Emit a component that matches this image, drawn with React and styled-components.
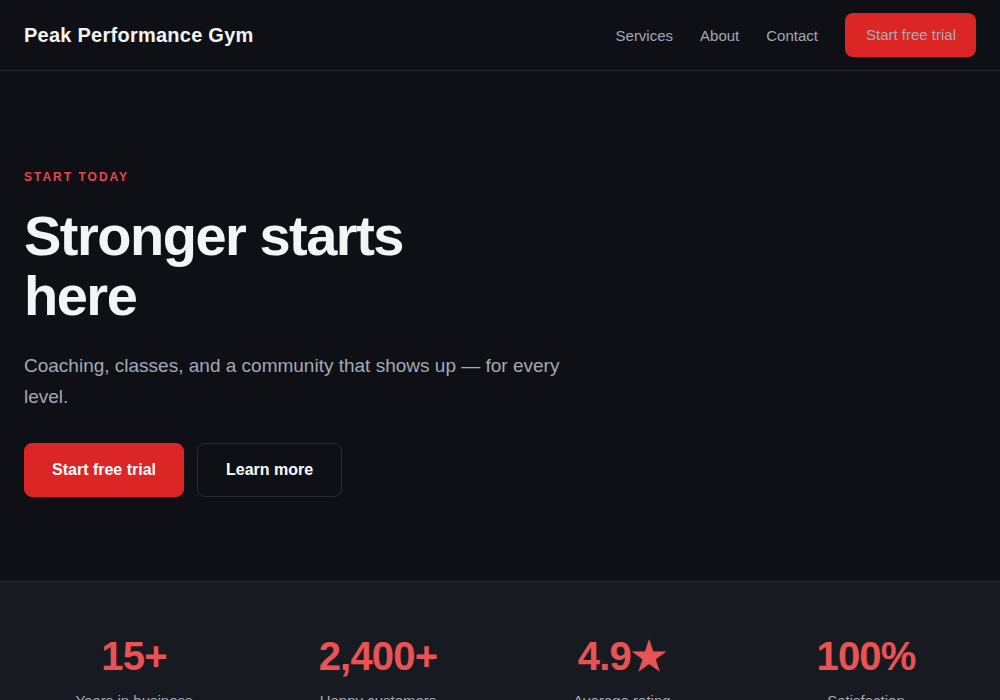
import React from 'react';
import styled, { createGlobalStyle } from 'styled-components';

const GlobalStyle = createGlobalStyle`
  * { box-sizing: border-box; }
  body {
    margin: 0;
    background: #0f1015;
    color: #f3f4f6;
    font-family: "Liberation Sans", Arial, sans-serif;
  }
`;

const Page = styled.div`
  min-height: 100vh;
  background: #0f1015;
`;

const Header = styled.header`
  height: 71px;
  padding: 0 24px;
  display: flex;
  align-items: center;
  justify-content: space-between;
  border-bottom: 1px solid #262832;
`;

const Logo = styled.div`
  font-size: 20px;
  font-weight: 700;
  letter-spacing: 0.25px;
  color: #f3f4f6;
`;

const Nav = styled.nav`
  display: flex;
  align-items: center;
  gap: 27px;
`;

const NavLink = styled.a`
  font-size: 15px;
  color: #a3a9b5;
  text-decoration: none;
`;

const NavButton = styled.a`
  display: inline-block;
  padding: 12px 20px 12px 21px;
  font-size: 15px;
  line-height: 20px;
  color: #a8adb8;
  background: #dc2626;
  border-radius: 8px;
  text-decoration: none;
`;

const Hero = styled.section`
  padding: 96px 24px 84px;
`;

const Eyebrow = styled.div`
  font-size: 12px;
  font-weight: 700;
  letter-spacing: 2px;
  text-transform: uppercase;
  color: #e5484d;
  line-height: 20px;
`;

const Title = styled.h1`
  margin: 19px 0 0;
  max-width: 480px;
  font-size: 56px;
  line-height: 60px;
  font-weight: 700;
  letter-spacing: -1.5px;
  color: #f3f4f6;
`;

const Lead = styled.p`
  margin: 24px 0 0;
  max-width: 560px;
  font-size: 19px;
  line-height: 31px;
  color: #a3a9b5;
`;

const Actions = styled.div`
  display: flex;
  gap: 13px;
  margin-top: 31px;
`;

const Button = styled.a`
  display: inline-block;
  padding: 16px ${(p) => (p.$primary ? '27px' : '28px')};
  font-size: 16px;
  line-height: 20px;
  font-weight: 700;
  border-radius: 8px;
  text-decoration: none;
  color: #ffffff;
  background: ${(p) => (p.$primary ? '#dc2626' : 'transparent')};
  border: 1px solid ${(p) => (p.$primary ? '#dc2626' : '#2a2c35')};
`;

const Stats = styled.section`
  background: #181a21;
  border-top: 1px solid #262832;
  padding: 50px 24px 48px;
  display: grid;
  grid-template-columns: repeat(4, 1fr);
  gap: 24px;
`;

const Stat = styled.div`
  text-align: center;
`;

const StatValue = styled.div`
  font-size: 40px;
  line-height: 48px;
  font-weight: 700;
  letter-spacing: -0.8px;
  color: #e85353;
`;

const StatLabel = styled.div`
  margin-top: 12px;
  font-size: 15px;
  color: #a3a9b5;
`;

const stats = [
  { value: '15+', label: 'Years in business' },
  { value: '2,400+', label: 'Happy customers' },
  { value: '4.9★', label: 'Average rating' },
  { value: '100%', label: 'Satisfaction' },
];

export default function App() {
  return (
    <Page>
      <GlobalStyle />
      <Header>
        <Logo>Peak Performance Gym</Logo>
        <Nav>
          <NavLink href="#">Services</NavLink>
          <NavLink href="#">About</NavLink>
          <NavLink href="#">Contact</NavLink>
          <NavButton href="#">Start free trial</NavButton>
        </Nav>
      </Header>
      <Hero>
        <Eyebrow>Start today</Eyebrow>
        <Title>Stronger starts here</Title>
        <Lead>Coaching, classes, and a community that shows up — for every level.</Lead>
        <Actions>
          <Button href="#" $primary>Start free trial</Button>
          <Button href="#">Learn more</Button>
        </Actions>
      </Hero>
      <Stats>
        {stats.map((s) => (
          <Stat key={s.label}>
            <StatValue>{s.value}</StatValue>
            <StatLabel>{s.label}</StatLabel>
          </Stat>
        ))}
      </Stats>
    </Page>
  );
}
